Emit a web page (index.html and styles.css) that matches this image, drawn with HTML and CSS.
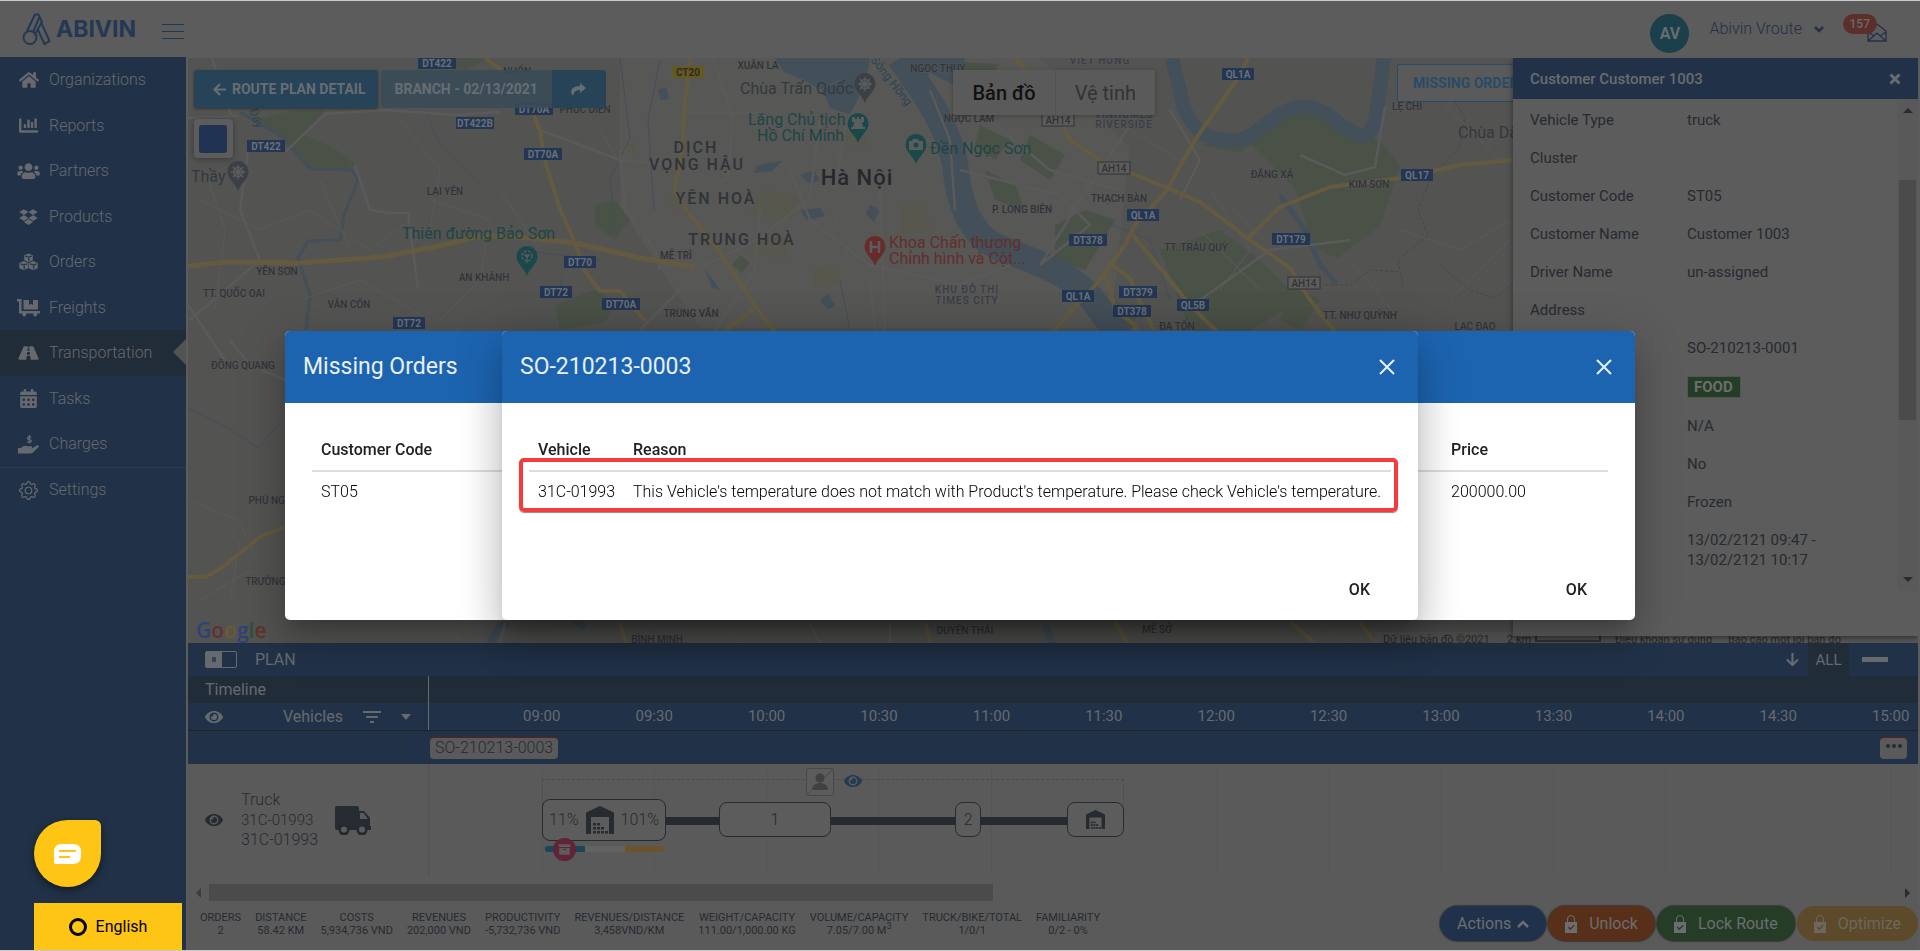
FILE: index.html
```html
<!DOCTYPE html>
<html lang="en">
<head>
<meta charset="utf-8">
<title>Abivin vRoute</title>
<link rel="stylesheet" href="styles.css">
</head>
<body>
<svg class="defs" aria-hidden="true">
  <symbol id="eye" viewBox="0 0 576 512"><path d="M572.52 241.4C518.29 135.59 410.93 64 288 64S57.68 135.64 3.48 241.41a32.35 32.35 0 0 0 0 29.19C57.71 376.41 165.07 448 288 448s230.32-71.64 284.52-177.41a32.35 32.35 0 0 0 0-29.19zM288 400a144 144 0 1 1 144-144 143.93 143.93 0 0 1-144 144zm0-240a95.31 95.31 0 0 0-25.31 3.79 47.85 47.85 0 0 1-66.9 66.9A95.78 95.78 0 1 0 288 160z"/></symbol>
  <symbol id="lock" viewBox="0 0 12 19"><path d="M2.500 8V5a3.500 3.500 0 0 1 7 0v3" fill="none" stroke="currentColor" stroke-width="1"/><path fill-rule="evenodd" d="M0 8h12v11H0zM2.700 13.500 5.300 16.300 9.700 11.700 8.700 10.800 5.300 14.300 3.700 12.500z"/></symbol>
  <symbol id="depot" viewBox="0 0 28 28"><path fill-rule="evenodd" d="M0 6.500 14 0l14 6.500V28h-5V11H5v17H0z"/><path d="M7 17h3v2.500H7zM11 17h3v2.500h-3zM7 21h3v2.500H7zM11 21h3v2.500h-3zM15 21h3v2.500h-3zM7 25h3v2.500H7zM11 25h3v2.500h-3zM15 25h3v2.500h-3zM19 25h3v2.500h-3z"/></symbol>
  <symbol id="close" viewBox="0 0 16 16"><path d="M1 1 15 15M15 1 1 15" fill="none" stroke="currentColor" stroke-width="2"/></symbol>
</svg>

<div class="app">
  <header class="topbar">
    <a class="logo" href="#">
      <svg class="line" width="30" height="33" viewBox="0 0 30 33" stroke="currentColor" stroke-width="2"><circle cx="8" cy="24.500" r="6.500"/><path d="M5 18 13 1.500h3.500L20 9l-7.500 13M11 19l6.500-15M19 9l8.500 19-5 3-6.500-14"/></svg>
      <span>ABIVIN</span>
    </a>
    <button class="burger" aria-label="Menu"><i></i><i></i><i></i></button>
    <div class="account">
      <span class="avatar">AV</span>
      <button class="user">Abivin Vroute <svg class="line" width="10" height="7" viewBox="0 0 10 7"><path d="M1 1l4 4 4-4" stroke="currentColor" stroke-width="2.500"/></svg></button>
      <button class="inbox" aria-label="Messages">
        <svg class="line" width="20" height="19" viewBox="0 0 20 19" stroke="currentColor" stroke-width="1.300"><path d="M1 8 10 1l9 7v10H1zM1 9l6 4M19 9l-6 4M1 18l9-8 9 8"/></svg>
        <span class="count">157</span>
      </button>
    </div>
  </header>

  <div class="body">
    <nav class="sidebar">
      <a href="#"><svg width="20" height="18" viewBox="0 0 576 512"><path d="M280.37 148.26L96 300.11V464a16 16 0 0 0 16 16l112.06-.29a16 16 0 0 0 15.92-16V368a16 16 0 0 1 16-16h64a16 16 0 0 1 16 16v95.64a16 16 0 0 0 16 16.05L464 480a16 16 0 0 0 16-16V300L295.67 148.26a12.19 12.19 0 0 0-15.3 0zM571.6 251.47L488 182.56V44.05a12 12 0 0 0-12-12h-56a12 12 0 0 0-12 12v72.61L318.47 43a48 48 0 0 0-61 0L4.34 251.47a12 12 0 0 0-1.6 16.9l25.5 31A12 12 0 0 0 45.15 301l235.22-193.74a12.19 12.19 0 0 1 15.3 0L530.9 301a12 12 0 0 0 16.9-1.6l25.5-31a12 12 0 0 0-1.7-16.93z"/></svg>Organizations</a>
      <a href="#"><svg width="19" height="19" viewBox="0 0 512 512"><path d="M332.8 320h38.4c6.4 0 12.8-6.4 12.8-12.8V172.8c0-6.4-6.4-12.8-12.8-12.8h-38.4c-6.4 0-12.8 6.4-12.8 12.8v134.4c0 6.4 6.4 12.8 12.8 12.8zm96 0h38.4c6.4 0 12.8-6.4 12.8-12.8V76.8c0-6.4-6.4-12.8-12.8-12.8h-38.4c-6.4 0-12.8 6.4-12.8 12.8v230.4c0 6.4 6.4 12.8 12.8 12.8zm-288 0h38.4c6.4 0 12.8-6.4 12.8-12.8v-70.4c0-6.4-6.4-12.8-12.8-12.8h-38.4c-6.4 0-12.8 6.4-12.8 12.8v70.4c0 6.4 6.4 12.8 12.8 12.8zm96 0h38.4c6.4 0 12.8-6.4 12.8-12.8V108.8c0-6.4-6.4-12.8-12.8-12.8h-38.4c-6.4 0-12.8 6.4-12.8 12.8v198.4c0 6.4 6.4 12.8 12.8 12.8zM496 384H64V80c0-8.84-7.16-16-16-16H16C7.16 64 0 71.16 0 80v336c0 17.67 14.33 32 32 32h464c8.84 0 16-7.16 16-16v-32c0-8.84-7.16-16-16-16z"/></svg>Reports</a>
      <a href="#"><svg width="23" height="18" viewBox="0 0 640 512"><path d="M96 224c35.3 0 64-28.7 64-64s-28.7-64-64-64-64 28.7-64 64 28.7 64 64 64zm448 0c35.3 0 64-28.7 64-64s-28.7-64-64-64-64 28.7-64 64 28.7 64 64 64zm32 32h-64c-17.6 0-33.5 7.1-45.1 18.6 40.3 22.1 68.9 62 75.1 109.4h66c17.7 0 32-14.3 32-32v-32c0-35.3-28.7-64-64-64zm-256 0c61.9 0 112-50.1 112-112S381.9 32 320 32 208 82.1 208 144s50.1 112 112 112zm76.8 32h-8.3c-20.8 10-43.9 16-68.5 16s-47.6-6-68.5-16h-8.3C179.6 288 128 339.6 128 403.2V432c0 26.5 21.5 48 48 48h288c26.5 0 48-21.5 48-48v-28.8c0-63.6-51.6-115.2-115.2-115.2zm-223.7-13.4C161.5 263.1 145.6 256 128 256H64c-35.3 0-64 28.7-64 64v32c0 17.7 14.3 32 32 32h65.9c6.3-47.4 34.9-87.3 75.2-109.4z"/></svg>Partners</a>
      <a href="#"><svg width="19" height="18" viewBox="0 0 528 512"><path d="M264.4 116.3l-132 84.3 132 84.3-132 84.3L0 284.1l132.3-84.3L0 116.3 132.3 32l132.1 84.3zM131.6 395.7l132-84.3 132 84.3-132 84.3-132-84.3zm132.8-111.6l132-84.3-132-83.6L395.7 32 528 116.3l-132.3 84.3L528 284.8l-132.3 84.3-131.3-85z"/></svg>Products</a>
      <a href="#"><svg width="19" height="18" viewBox="0 0 20 18"><path d="M10 0l4.500 2v5.200L10 9.300 5.500 7.200V2zM5 8l4.700 2.100v5.400L5 17.800.300 15.500v-5.400zM15 8l4.700 2.100v5.400L15 17.800l-4.700-2.300v-5.400z"/><path d="M6.500 2.600 10 4l3.500-1.400M10.500 4.500v4M1.500 10.800 5 12.300l3.500-1.500M5.500 13v4M11.500 10.800l3.500 1.500 3.500-1.500M15.500 13v4" fill="none" stroke="#213248" stroke-width="1.200"/></svg>Orders</a>
      <a href="#"><svg width="23" height="18" viewBox="0 0 23 18"><path d="M0 0h4.500v12H23v2.500h-3a2 2 0 1 1-3.500 0H9a2 2 0 1 1-3.500 0H2V2.500H0zM6.500 1H12v5l2-1.200L16 6V1h5v9.500H6.500z"/></svg>Freights</a>
      <a href="#" class="active"><svg width="21" height="18" viewBox="0 0 576 512"><path d="M573.19 402.67l-139.79-320C428.43 71.29 417.6 64 405.68 64h-97.59l2.45 23.16c.5 4.72-3.21 8.84-7.96 8.84h-29.16c-4.75 0-8.46-4.12-7.96-8.84L267.91 64h-97.59c-11.93 0-22.76 7.29-27.73 18.67L2.8 402.67C-6.45 423.86 8.31 448 30.54 448h196.84l10.31-97.68c.86-8.14 7.72-14.32 15.91-14.32h68.8c8.19 0 15.05 6.18 15.91 14.32L348.62 448h196.84c22.23 0 36.99-24.14 27.73-45.33zM260.4 135.16a8 8 0 0 1 7.96-7.16h39.29c4.09 0 7.53 3.09 7.96 7.16l4.6 43.58c.75 7.09-4.81 13.26-11.93 13.26h-40.54c-7.13 0-12.68-6.17-11.93-13.26l4.59-43.58zM315.64 304h-55.29c-9.5 0-16.91-8.23-15.91-17.68l5.07-48c.86-8.14 7.72-14.32 15.91-14.32h45.15c8.19 0 15.05 6.18 15.91 14.32l5.07 48c1 9.45-6.41 17.68-15.91 17.68z"/></svg>Transportation</a>
      <a href="#"><svg width="17" height="19" viewBox="0 0 448 512"><path d="M0 464c0 26.5 21.5 48 48 48h352c26.5 0 48-21.5 48-48V192H0v272zm320-196c0-6.6 5.4-12 12-12h40c6.6 0 12 5.4 12 12v40c0 6.6-5.4 12-12 12h-40c-6.6 0-12-5.4-12-12v-40zm0 128c0-6.6 5.4-12 12-12h40c6.6 0 12 5.4 12 12v40c0 6.6-5.4 12-12 12h-40c-6.6 0-12-5.4-12-12v-40zM192 268c0-6.6 5.4-12 12-12h40c6.6 0 12 5.4 12 12v40c0 6.6-5.4 12-12 12h-40c-6.6 0-12-5.4-12-12v-40zm0 128c0-6.6 5.4-12 12-12h40c6.6 0 12 5.4 12 12v40c0 6.6-5.4 12-12 12h-40c-6.6 0-12-5.4-12-12v-40zM64 268c0-6.6 5.4-12 12-12h40c6.6 0 12 5.4 12 12v40c0 6.6-5.4 12-12 12H76c-6.6 0-12-5.4-12-12v-40zm0 128c0-6.6 5.4-12 12-12h40c6.6 0 12 5.4 12 12v40c0 6.6-5.4 12-12 12H76c-6.6 0-12-5.4-12-12v-40zM400 64h-48V16c0-8.8-7.2-16-16-16h-32c-8.8 0-16 7.2-16 16v48H160V16c0-8.8-7.2-16-16-16h-32c-8.8 0-16 7.2-16 16v48H48C21.5 64 0 85.5 0 112v48h448v-48c0-26.5-21.5-48-48-48z"/></svg>Tasks</a>
      <a href="#"><svg width="21" height="19" viewBox="0 0 21 19"><path d="M0 13h3c2-2 4-2.300 6-1.700h4c1.500 0 1.500 2 0 2.200H9.500h4.500l4.500-3c1.500-.800 3 .600 1.800 1.800L15 17.500c-.800.700-1.500 1-2.500 1H0z"/><path d="M13.200 2.500c-.700-.900-3.700-1-3.700.700s3.800 1 3.800 2.700-3 1.600-3.900.600M11.400 0v8.500" fill="none" stroke="currentColor" stroke-width="1.300"/></svg>Charges</a>
      <a href="#" class="split"><svg width="19" height="19" viewBox="0 0 16 16"><path d="M8 4.754a3.246 3.246 0 1 0 0 6.492 3.246 3.246 0 0 0 0-6.492zM5.754 8a2.246 2.246 0 1 1 4.492 0 2.246 2.246 0 0 1-4.492 0z"/><path d="M9.796 1.343c-.527-1.79-3.065-1.79-3.592 0l-.094.319a.873.873 0 0 1-1.255.52l-.292-.16c-1.64-.892-3.433.902-2.54 2.541l.159.292a.873.873 0 0 1-.52 1.255l-.319.094c-1.79.527-1.79 3.065 0 3.592l.319.094a.873.873 0 0 1 .52 1.255l-.16.292c-.892 1.64.901 3.434 2.541 2.54l.292-.159a.873.873 0 0 1 1.255.52l.094.319c.527 1.79 3.065 1.79 3.592 0l.094-.319a.873.873 0 0 1 1.255-.52l.292.16c1.64.893 3.434-.902 2.54-2.541l-.159-.292a.873.873 0 0 1 .52-1.255l.319-.094c1.79-.527 1.79-3.065 0-3.592l-.319-.094a.873.873 0 0 1-.52-1.255l.16-.292c.893-1.64-.902-3.433-2.541-2.54l-.292.159a.873.873 0 0 1-1.255-.52l-.094-.319zm-2.633.283c.246-.835 1.428-.835 1.674 0l.094.319a1.873 1.873 0 0 0 2.693 1.115l.291-.16c.764-.415 1.6.42 1.184 1.185l-.159.292a1.873 1.873 0 0 0 1.116 2.692l.318.094c.835.246.835 1.428 0 1.674l-.319.094a1.873 1.873 0 0 0-1.115 2.693l.16.291c.415.764-.42 1.6-1.185 1.184l-.291-.159a1.873 1.873 0 0 0-2.693 1.116l-.094.318c-.246.835-1.428.835-1.674 0l-.094-.319a1.873 1.873 0 0 0-2.692-1.115l-.292.16c-.764.415-1.6-.42-1.184-1.185l.159-.291A1.873 1.873 0 0 0 1.945 8.93l-.319-.094c-.835-.246-.835-1.428 0-1.674l.319-.094A1.873 1.873 0 0 0 3.06 4.377l-.16-.292c-.415-.764.42-1.6 1.185-1.184l.292.159a1.873 1.873 0 0 0 2.692-1.115l.094-.319z"/></svg>Settings</a>
    </nav>

    <main class="content">
      <section class="map">
        <svg class="map-canvas" viewBox="188 58 1730 585" preserveAspectRatio="xMinYMin slice">
          <defs>
            <rect id="b38" x="-19" y="-6" width="38" height="12"/>
            <rect id="b32" x="-16" y="-6" width="32" height="12"/>
            <path id="pin" d="M0 15C-2 8-10.500 3-10.500-4.500a10.500 10.500 0 0 1 21 0C10.500 3 2 8 0 15z"/>
          </defs>
          <rect x="188" y="58" width="1730" height="585" fill="#535351"/>
          <path fill="#575756" d="M620 58h420l90 90-20 180H700l-80-120z"/>
          <g class="park">
            <path d="M258 120l35-10h32l-20 25 30 14 20 16-8 5-38-2-19-25z"/><path d="M435 58h55l-25 12-20-4zM595 205l20-5 15 20-15 20-20-15z"/>
            <path d="M555 305l40-15 20 12-10 20-45 8zM740 255l10 8-8 10-10-8z"/>
            <path d="M1200 145l40 8 50-42 60 10 35 25 15 20-20 60-42 32-25-10-18-60-50-50z"/>
            <path d="M1030 135l35 20-15 25-30-20zM1055 225l30-15 30 10-30 50-30-10zM1160 250l60-20 40 30 40 40-50 31h-60zM985 170l30 15 10 25-30-10zM1110 300l30 10-10 20h-20zM1290 285l30 15-20 30-20-10z"/>
            <path d="M960 62l40 2-15 20-25-5zM980 125l30 15-15 20-20-15z"/>
          </g>
          <path fill="#58574d" d="M760 190l40 5-10 25-40-5zM900 205l25-5 5 30-30 5zM840 130l30 4-5 12-30-4zM755 235l35 5-5 18-35-4zM810 270l30-4v16l-25 6zM618 145l20-2-5 12zM665 200l15-3-3 20z"/>
          <g class="water-fill">
            <path d="M775 58h95l-6 34-14 22-20-6-6-16-20-12-20-8zM905 58h60l-5 30-20-10zM757 165l25-4-10 10-18 2zM800 175l14-5 6 10-10 4zM800 210l20-2 5 8-18 4zM870 205l10 5-6 12-8-8zM820 300l8-6 8 12-8 3zM658 90l8-3 3 12-8 1zM560 275l4 20-3 2zM705 270l15 20-8-2z"/>
          </g>
          <g class="water">
            <path stroke-width="26" d="M900 58c20 30 45 60 55 105 3 35 12 65 35 80 35 18 80 25 105 60l25 35"/>
            <path stroke-width="14" d="M1172 58l12 50c10 25 25 32 50 33 25-2 40-34 70-34 30 0 40 32 62 28 12-5 12-40 18-77"/>
            <path stroke-width="5" d="M1280 195l25 35 15 35 16 18"/>
            <path stroke-width="3" d="M240 112l42 25 28 32 42 1 6 10-14 35-4 25-32 1-10 17 12 37-4 35"/>
            <path stroke-width="1" d="M425 110l15 35 45 45M620 58l10 80-20 40 5 50M520 250l80 10M660 60l-12 60 6 90M850 330l-10-50M188 408l40 20 30 20 27-30M1100 220l50 20 20 60M1300 225l30 30"/>
            <path stroke-width="7" d="M575 620l10 8M490 643l10-18h10M1045 625l10 25"/>
          </g>
          <g class="minor">
            <path stroke-width="2.500" d="M188 118l50-2M232 118l-20-60M190 320l70-60-20-50 8-60M285 152l40-38 60-4 70 5 45-3M355 165l15 45 20 3 18 0 10 75M540 130l80 30 50 5M685 113h75l30 25M713 58l20 60-5 60-20 10M620 150l5 60 30 40 5 20M700 268l60-30 50-40 10-80M790 170l20 50 60 45 90 20 50-20M880 58l-35 70-10 60M960 170l100 25 30 30-50 40 50-80 50-75M990 120l60 50 70 20M1180 200l20-40-30-50M1200 300l70-50 80-10M1300 155l45 20 30-8 10-60M870 280l5 50M640 330l60-60M760 210l-5 60-40 60M930 90l20 50 5 70M880 190l5 140M230 340l20 25 35 15M188 305l40 60M820 643l-10-20M890 643v-20M500 643l5-20"/>
            <path stroke-width="1" d="M200 200l60 30 50-20 60 40 40-30M205 170l20 60-10 80M320 180l30 70M400 120l40 50-10 60M300 300l60-20 70 40M430 200l60 20-10 60-40 40M500 190l40 60M720 90l60 20 60-30M730 160l40 50M600 130l30 50M1010 180l60 30 30-50M1210 190l40 60-30 40M1230 205l40 40M1200 230l60 60M1350 260l50 60M1400 230l60 20 50-30M1450 300l60-60M1440 100l60 60M830 200l30 90M1130 130l50 30M188 500l50 20 20 40M200 600l50-30 30 20M240 540l-10 60M640 643l10-20M740 643l-10-20M1350 643l-30-20"/>
          </g>
          <g class="highway">
            <path d="M188 266l37-4 75 1 80-6 50-9 50-12 50 2 45 5 65 15 55 9" stroke-width="5"/>
            <path d="M188 577h17l15-8 40-32 25-10M485 58l38 28 17 45 5 30 15 48 14 32 11 30 15 20h20l25 30M690 58l-6 55-2 40-8 38 16 24 25 30 45 68 20 25M725 330l28-20M1248 58l-8 17-45 65-20 35-8 15-32 35-10 20-25 35-25 27-25 28M1015 58l15 17 30 45 10 20 30 20 60 25 40 17 50 38 40 28 20 32 25 32M1248 238l32-31 50-20 70-9 60-13 53-5M1133 235l27 33 30 37 30 30M1108 262l22 16 10 24 15 30M1105 270l10 40 20 15v10M1513 159h20M620 622l6 21M1115 622l12 21M1290 622l25 21M1360 622l15 21M925 622l6 21" stroke-width="4"/>
          </g>
          <path fill="none" stroke="#474747" stroke-dasharray="3 2" d="M1455 102l10 15-5 30-20 20M1430 180l-12 30 10 25-30 25 5 25M1325 285h25l20-15 30 2M1440 265l30 25 25 8 18-14"/>
          <g class="pins">
            <use href="#pin" x="238" y="176" fill="#3a4045"/><use href="#pin" x="865" y="88" fill="#3a4045"/>
            <use href="#pin" x="527" y="261" fill="#1b484b"/><use href="#pin" x="858" y="128" fill="#1b484b"/><use href="#pin" x="916" y="149" fill="#1b484b"/>
            <use href="#pin" x="875" y="251" fill="#672c2a"/>
            <g fill="none" stroke="#5c5c5c" stroke-width="1.300"><circle cx="238" cy="172" r="4.500"/><circle cx="238" cy="172" r="1.500"/><path d="M231 172h14M238 165v14M233 167l10 10M243 167l-10 10"/><circle cx="865" cy="84" r="4.500"/><circle cx="865" cy="84" r="1.500"/><path d="M858 84h14M865 77v14M860 79l10 10M870 79l-10 10"/><circle cx="527" cy="256" r="5" stroke-dasharray="2.500 1.500"/><path d="M527 254v9M524 254l3 3 3-3"/><path d="M871 241v12M879 241v12M871 247h8" stroke-width="2.500"/></g>
            <path fill="#5c5c5c" d="M852 117h3v2h2v-2h2v2h2v-2h3v5h-2l1 5h2v2h-14v-2h2l1-5h-2zM909 141h3l1-2h5l1 2h4v9h-14z"/><circle cx="916" cy="145" r="2.500" fill="#1b484b"/>
          </g>
          <g class="shield">
            <g transform="translate(437 63)"><use href="#b38"/><text>DT422</text></g>
            <g transform="translate(266 146)"><use href="#b38"/><text>DT422</text></g>
            <g transform="translate(475 123)"><use href="#b38"/><text>DT422B</text></g>
            <g transform="translate(534 109)"><use href="#b38"/><text>DT70A</text></g>
            <g transform="translate(543 154)"><use href="#b38"/><text>DT70A</text></g>
            <g transform="translate(580 262)"><use href="#b32"/><text>DT70</text></g>
            <g transform="translate(556 292)"><use href="#b32"/><text>DT72</text></g>
            <g transform="translate(621 304)"><use href="#b38"/><text>DT70A</text></g>
            <g transform="translate(409 323)"><use href="#b32"/><text>DT72</text></g>
            <g transform="translate(1238 74)"><use href="#b32"/><text>QL1A</text></g>
            <g transform="translate(1143 215)"><use href="#b32"/><text>QL1A</text></g>
            <g transform="translate(1088 240)"><use href="#b38"/><text>DT378</text></g>
            <g transform="translate(1291 239)"><use href="#b38"/><text>DT179</text></g>
            <g transform="translate(1417 175)"><use href="#b32"/><text>QL17</text></g>
            <g transform="translate(1138 292)"><use href="#b38"/><text>DT379</text></g>
            <g transform="translate(1078 296)"><use href="#b32"/><text>QL1A</text></g>
            <g transform="translate(1132 311)"><use href="#b38"/><text>DT378</text></g>
            <g transform="translate(1193 305)"><use href="#b32"/><text>QL5B</text></g>
          </g>
          <g class="shield toll"><g transform="translate(688 72)"><use href="#b32"/><text>CT20</text></g></g>
          <g class="shield asian">
            <g transform="translate(1058 120)"><use href="#b32"/><text>AH14</text></g>
            <g transform="translate(1114 168)"><use href="#b32"/><text>AH14</text></g>
            <g transform="translate(1304 283)"><use href="#b32"/><text>AH14</text></g>
          </g>
          <g class="town">
            <text x="445" y="195">LẠI YÊN</text><text x="277" y="275">YÊN SƠN</text><text x="234" y="297">TT. QUỐC OAI</text><text x="349" y="308">VÂN CÔN</text>
            <text x="484" y="281">AN KHÁNH</text><text x="676" y="259">MỄ TRÌ</text><text x="691" y="317">TRUNG VĂN</text><text x="243" y="369">ĐỒNG QUANG</text><text x="275" y="504">PHÚ NGHĨA</text><text x="276" y="585">TRƯỜNG YÊN</text>
            <text x="517" y="75">NHỔN</text><text x="585" y="113">PHÚC DIỄN</text><text x="758" y="69">XUÂN LA</text><text x="938" y="72">NGỌC THỤY</text><text x="969" y="122">NGỌC LÂM</text>
            <text x="1022" y="213">P. LONG BIÊN</text><text x="1119" y="202">THẠCH BÀN</text><text x="1272" y="178">ĐẶNG XÁ</text><text x="1369" y="188">KIM SƠN</text><text x="1196" y="251">TT. TRÂU QUỲ</text>
            <text x="1360" y="319">TT. NHƯ QUỲNH</text><text x="1177" y="330">ĐA TỐN</text><text x="1475" y="330">LẠC ĐẠO</text><text x="1407" y="110">LỆ CHI</text>
            <text x="657" y="643">BÌNH MINH</text><text x="965" y="634">DUYÊN THÁI</text><text x="1157" y="633">MỄ SỞ</text>
          </g>
          <g class="suburb"><text x="1100" y="64">VIỆT HƯNG</text><text x="1124" y="118">VINHOMES</text><text x="1124" y="128">RIVERSIDE</text><text x="967" y="293">KHU ĐÔ THỊ</text><text x="967" y="304">TIMES CITY</text></g>
          <g class="district"><text x="696" y="153">DỊCH</text><text x="697" y="170">VỌNG HẬU</text><text x="716" y="204">YÊN HOÀ</text><text x="742" y="245">TRUNG HOÀ</text></g>
          <text x="857" y="185" class="city">Hà Nội</text>
          <g class="poi">
            <text x="191" y="182">Thầy</text><text x="740" y="94">Chùa Trấn Quốc</text><text x="1458" y="138">Chùa Dâu</text>
            <g class="teal"><text x="402" y="239">Thiên đường Bảo Sơn</text><text x="748" y="125">Lăng Chủ tịch</text><text x="757" y="141">Hồ Chí Minh</text><text x="930" y="154">Đền Ngọc Sơn</text></g>
            <g class="red"><text x="889" y="248">Khoa Chấn thương</text><text x="889" y="264">Chỉnh hình và Cột...</text></g>
            <text class="river" transform="translate(870 60) rotate(52)">Sông Hồng</text><text class="river" transform="translate(249 110) rotate(70)">Đáy</text>
          </g>
          <text x="196" y="638" class="google"><tspan fill="#2b4379">G</tspan><tspan fill="#65302d">o</tspan><tspan fill="#6b5b2a">o</tspan><tspan fill="#2b4379">g</tspan><tspan fill="#2d5038">l</tspan><tspan fill="#65302d">e</tspan></text>
          <rect x="1375" y="632" width="543" height="11" fill="#575757"/>
          <g class="legal"><text x="1383" y="643">Dữ liệu bản đồ ©2021</text><text x="1507" y="643">2 km</text><text x="1615" y="643">Điều khoản sử dụng</text><text x="1728" y="643">Báo cáo một lỗi bản đồ</text><path d="M1536 632v9h64v-9" fill="none" stroke="#333" stroke-width="2"/></g>
        </svg>

        <div class="map-tools">
          <div class="crumbs">
            <button class="btn-back"><svg class="line" width="13" height="13" viewBox="0 0 13 13"><path d="M7 1 1.500 6.500 7 12M2 6.500h11" stroke="currentColor" stroke-width="2.200"/></svg>ROUTE PLAN DETAIL</button>
            <button class="btn-branch">BRANCH - 02/13/2021</button>
            <button class="btn-share" aria-label="Share"><svg width="15" height="13" viewBox="0 0 15 13"><path d="M9 0l6 5-6 5V7C5 7 3 8.500 2.500 12.500.500 12-.500 9 .700 6.500 2 4 5 3.200 9 3z"/></svg></button>
          </div>
          <div class="map-type"><button class="on">Bản đồ</button><button>Vệ tinh</button></div>
          <button class="btn-missing">MISSING ORDERS</button>
        </div>
        <button class="swatch" aria-label="Draw area"><i></i></button>

        <aside class="panel">
          <h2>Customer Customer 1003 <button aria-label="Close"><svg width="12" height="12" viewBox="0 0 12 12"><path d="M1.500 1.500l9 9M10.500 1.500l-9 9" stroke="currentColor" stroke-width="3"/></svg></button></h2>
          <div class="panel-scroll">
            <dl>
              <dt>Vehicle Type</dt><dd>truck</dd>
              <dt>Cluster</dt><dd></dd>
              <dt>Customer Code</dt><dd>ST05</dd>
              <dt>Customer Name</dt><dd>Customer 1003</dd>
              <dt>Driver Name</dt><dd>un-assigned</dd>
              <dt>Address</dt><dd></dd>
              <dt></dt><dd>SO-210213-0001</dd>
              <dt></dt><dd><span class="tag">FOOD</span></dd>
              <dt></dt><dd>N/A</dd>
              <dt></dt><dd>No</dd>
              <dt></dt><dd>Frozen</dd>
              <dt></dt><dd>13/02/2121 09:47 -<br>13/02/2121 10:17</dd>
            </dl>
            <div class="vbar"><b class="up"></b><i></i><b class="down"></b></div>
          </div>
        </aside>
      </section>

      <section class="plan">
        <div class="plan-head">
          <span class="switch"><i></i></span><span>PLAN</span>
          <div class="plan-tools">
            <button class="sort" aria-label="Sort"><svg class="line" width="13" height="13" viewBox="0 0 13 13"><path d="M1 6.500 6.500 12 12 6.500M6.500 0v11" stroke="currentColor" stroke-width="2.200"/></svg></button>
            <button class="all">ALL</button>
            <button class="mini" aria-label="Minimise"><i></i></button>
          </div>
        </div>
        <div class="strip dark"><div class="side">Timeline</div></div>
        <div class="strip">
          <div class="side cols"><svg class="eye"><use href="#eye"/></svg><span>Vehicles</span><svg width="18" height="12" viewBox="0 0 18 12"><path d="M0 0h18v2H0zM3 5h12v2H3zM7 10h4v2H7z"/></svg><svg width="10" height="6" viewBox="0 0 10 6"><path d="M0 0h10L5 6z"/></svg></div>
          <div class="hours"><span>09:00</span><span>09:30</span><span>10:00</span><span>10:30</span><span>11:00</span><span>11:30</span><span>12:00</span><span>12:30</span><span>13:00</span><span>13:30</span><span>14:00</span><span>14:30</span><span>15:00</span></div>
        </div>
        <div class="orders"><button class="chip">SO-210213-0003</button><button class="chip more" aria-label="More"><i></i><i></i><i></i></button></div>
        <div class="lane">
          <div class="vehicle">
            <svg class="eye"><use href="#eye"/></svg>
            <div class="names"><span>Truck</span><span class="plate">31C-01993</span><span>31C-01993</span></div>
            <svg width="36" height="29" viewBox="0 0 36 29"><path fill-rule="evenodd" d="M2 0h20q2 0 2 2v3h5l6 7v8h1v4h-3.500a5.500 5.500 0 0 1-11 0h-7a5.500 5.500 0 0 1-11 0H2q-2 0-2-2V2q0-2 2-2zM25 7v6h8l-4.500-6z"/><circle cx="9" cy="23.500" r="4.500"/><circle cx="27" cy="23.500" r="4.500"/><circle cx="9" cy="23.500" r="3" fill="#5b5b5b"/><circle cx="27" cy="23.500" r="3" fill="#5b5b5b"/></svg>
          </div>
          <div class="canvas">
            <div class="trip" style="left:7.59%;width:39.09%"></div>
            <div class="link" style="left:12%;width:33%"></div>
            <div class="stop depot" style="left:7.59%;width:8.33%"><span>11%</span><svg width="28" height="28"><use href="#depot"/></svg><span>101%</span></div>
            <div class="stop" style="left:19.48%;width:7.52%">1</div>
            <div class="stop" style="left:35.33%;width:1.75%">2</div>
            <div class="stop" style="left:42.85%;width:3.83%"><svg width="19" height="19"><use href="#depot"/></svg></div>
            <div class="load" style="left:7.8%;width:8%"><i></i><i></i><i></i></div>
            <svg class="box" style="left:8.33%" viewBox="0 0 22 22"><circle cx="11" cy="11" r="11" fill="#612338"/><path fill="#5c5c5c" fill-rule="evenodd" d="M5.500 6h11v2.500h-11zM6 9.500h10V16H6zM9.500 10.500v1h3v-1z"/></svg>
            <button class="driver" style="left:25.32%" aria-label="Driver"><svg viewBox="0 0 26 26"><circle cx="13" cy="9" r="4.500"/><path d="M5 21c0-5 4-7 8-7s8 2 8 7z"/><path d="M0 26 26 0" stroke="#474747" stroke-width="1"/></svg></button>
            <svg class="eye blue" style="left:27.87%"><use href="#eye"/></svg>
          </div>
        </div>
        <div class="hbar"><b class="left"></b><div><i></i></div><b class="right"></b></div>
        <div class="foot">
          <ul class="stats">
            <li>ORDERS<br>2</li><li>DISTANCE<br>58.42 KM</li><li>COSTS<br>5,934,736 VND</li><li>REVENUES<br>202,000 VND</li><li>PRODUCTIVITY<br>-5,732,736 VND</li><li>REVENUES/DISTANCE<br>3,458VND/KM</li><li>WEIGHT/CAPACITY<br>111.00/1,000.00 KG</li><li>VOLUME/CAPACITY<br>7.05/7.00 M<sup>3</sup></li><li>TRUCK/BIKE/TOTAL<br>1/0/1</li><li>FAMILIARITY<br>0/2 - 0%</li>
          </ul>
          <div class="actions">
            <button class="act">Actions <svg class="line" width="12" height="8" viewBox="0 0 12 8"><path d="M1 7l5-5 5 5" stroke="currentColor" stroke-width="2.500"/></svg></button>
            <button class="unlock"><svg width="12" height="19"><use href="#lock"/></svg>Unlock</button>
            <button class="lockr"><svg width="12" height="19"><use href="#lock"/></svg>Lock Route</button>
            <button class="opt"><svg width="12" height="19"><use href="#lock"/></svg>Optimize</button>
          </div>
        </div>
      </section>
    </main>
  </div>
</div>

<button class="chat" aria-label="Chat"><svg width="27" height="20" viewBox="0 0 27 20"><path fill="#fff" d="M8 0h11q8 0 8 8v4q0 8-8 8H2q-2 0-2-2V8q0-8 8-8z"/><path stroke="#fec514" stroke-width="2" d="M5 7h17M5 13h11"/></svg></button>
<button class="lang"><i></i>English</button>

<div class="overlay">
  <section class="modal wide" role="dialog" aria-label="Missing Orders">
    <h2>Missing Orders <button aria-label="Close"><svg width="16" height="16"><use href="#close"/></svg></button></h2>
    <table>
      <thead><tr><th class="c-code">Customer Code</th><th>Price</th></tr></thead>
      <tbody><tr><td>ST05</td><td>200000.00</td></tr></tbody>
    </table>
    <footer><button>OK</button></footer>
  </section>
</div>
<div class="overlay">
  <section class="modal" role="dialog" aria-label="SO-210213-0003">
    <h2>SO-210213-0003 <button aria-label="Close"><svg width="16" height="16"><use href="#close"/></svg></button></h2>
    <div class="marked">
      <table class="fixed">
        <thead><tr><th class="c-veh">Vehicle</th><th>Reason</th></tr></thead>
        <tbody><tr><td>31C-01993</td><td>This Vehicle's temperature does not match with Product's temperature. Please check Vehicle's temperature.</td></tr></tbody>
      </table>
      <div class="marker"></div>
    </div>
    <footer><button>OK</button></footer>
  </section>
</div>
</body>
</html>
```
FILE: styles.css
```css
:root {
  --white: #5c5c5c;
  --navy: #213248;
  --navy-dark: #202c38;
  --sky: #274357;
  --ink: #262a31;
  --blue: #1c64b0;
  --yellow: #fec514;
}

* { box-sizing: border-box; }

body {
  margin: 0;
  font: 16px/20px Roboto, "Noto Sans", sans-serif;
  color: var(--ink);
  background: var(--white);
}

button {
  font: inherit;
  color: inherit;
  background: none;
  border: 0;
  padding: 0;
}

a { color: inherit; text-decoration: none; }
svg { fill: currentColor; display: block; flex: none; }
.line { fill: none; }
.defs { position: absolute; width: 0; height: 0; }

.app {
  display: flex;
  flex-direction: column;
  height: 100vh;
  border-top: 1px solid #c8cdd0;
  border-bottom: 1px solid #c8c8c8;
}

/* Top bar */
.topbar {
  display: flex;
  align-items: center;
  height: 56px;
  padding: 0 33px 0 22px;
}
.logo {
  display: flex;
  align-items: center;
  gap: 4px;
  color: #233854;
  font: 700 23px/32px Inter, sans-serif;
}
.burger { display: grid; gap: 6px; width: 22px; margin: 4px 0 0 26px; }
.burger i { height: 1px; background: #233854; }
.account { display: flex; align-items: center; margin-left: auto; }
.avatar {
  width: 39px;
  height: 39px;
  margin-top: 8px;
  border-radius: 50%;
  background: #1b3f4b;
  color: #656d70;
  font-weight: 700;
  line-height: 40px;
  text-align: center;
}
.user { display: flex; align-items: center; gap: 12px; margin-left: 20px; color: #242f48; font-weight: 300; }
.inbox { position: relative; margin-left: 43px; padding-top: 6px; color: #242f48; }
.count {
  position: absolute;
  right: 10px;
  bottom: 8px;
  padding: 0 7px;
  border-radius: 10px;
  background: #5c2f2b;
  color: #696969;
  font-size: 12px;
  font-weight: 500;
}

.body { display: flex; flex: 1; min-height: 0; }

/* Sidebar */
.sidebar {
  flex: none;
  width: 186px;
  background: var(--navy);
  color: #666a6f;
  font-weight: 300;
}
.sidebar a {
  position: relative;
  display: grid;
  grid-template-columns: 25px 1fr;
  align-items: center;
  gap: 8px;
  height: 45px;
  padding-left: 16px;
}
.sidebar a:nth-child(odd) { height: 46px; }
.sidebar a svg { justify-self: center; }
.sidebar .active { background: var(--navy-dark); }
.sidebar .active::after {
  content: "";
  position: absolute;
  right: 0;
  top: 9px;
  border: 13px solid transparent;
  border-left: 0;
  border-right-color: #535353;
}
.sidebar .split { border-top: 1px solid #2c3e54; }

.content {
  flex: 1;
  min-width: 0;
  display: flex;
  flex-direction: column;
  padding: 1px 2px 0;
}

/* Map */
.map { position: relative; flex: 1; min-height: 0; overflow: hidden; }
.map-canvas { position: absolute; inset: 0; width: 100%; height: 100%; }
.map-canvas text { font-family: Roboto, "Noto Sans", sans-serif; }
.park { fill: #4a5248; }
.water-fill { fill: #434f59; }
.water { fill: none; stroke: #434f59; }
.minor { fill: none; stroke: #5a5a5a; }
.highway { fill: none; stroke: #635a40; stroke-linejoin: round; }
.shield { fill: #233654; }
.shield text { fill: #6a7078; font-size: 10px; font-weight: 700; text-anchor: middle; dominant-baseline: central; }
.toll { fill: #655820; }
.toll text { fill: #2c2c26; }
.asian { fill: #5c5c5c; }
.asian use { stroke: #333; }
.asian text { fill: #333; font-weight: 500; }
.town text, .suburb text { fill: #303338; font-size: 10px; font-weight: 500; text-anchor: middle; paint-order: stroke; stroke: #575755; stroke-width: 1px; }
.suburb text { fill: #393d47; letter-spacing: 1px; }
.district text { fill: #303338; font-size: 16px; font-weight: 500; letter-spacing: 2px; text-anchor: middle; }
.city { fill: #26282b; font-size: 22px; font-weight: 500; letter-spacing: 1px; text-anchor: middle; }
.poi text { fill: #34393e; font-size: 16px; }
.poi .teal text { fill: #1d4546; }
.poi .red text { fill: #642e2b; }
.poi .river { fill: #2b4355; font-size: 12px; }
.map-canvas .google { font: 600 21px "Open Sans", sans-serif; }
.legal { fill: #2b2b2b; font-size: 11px; }

.map-tools {
  position: relative;
  display: flex;
  align-items: flex-start;
  padding: 12px 375px 0 6px;
}
.crumbs { display: flex; height: 38px; color: #666e74; font-size: 14px; font-weight: 700; }
.crumbs button { display: flex; align-items: center; }
.btn-back { gap: 6px; padding: 0 12px 0 19px; border-radius: 3px; background: var(--sky); box-shadow: 0 1px 3px #0006; margin-right: 3px; }
.btn-branch { padding: 0 14px; border-radius: 3px 0 0 3px; background: #3a4b58e6; }
.btn-share { justify-content: center; width: 54px; border-radius: 0 3px 3px 0; background: var(--sky); }
.map-type { display: flex; height: 45px; margin: 0 242px 0 auto; background: #5a5a5a; box-shadow: 0 1px 4px #0004; font-size: 20px; color: #333; border-radius: 2px; }
.map-type button { padding: 0 19px; }
.map-type .on { color: #111; font-weight: 500; border-right: 1px solid #535353; }
.btn-missing {
  width: 146px;
  height: 38px;
  margin-top: -6px;
  border: 1px solid #274b68;
  border-radius: 2px;
  background: #5a5a5a;
  color: #274b68;
  font-size: 14px;
  font-weight: 700;
}
.swatch { position: relative; margin: 4px 0 0 6px; padding: 6px 6px 5px 5px; border-radius: 4px; background: var(--white); box-shadow: 0 1px 6px #0005; }
.swatch i { display: block; width: 28px; height: 28px; border-radius: 3px; background: #213352; }

.panel {
  position: absolute;
  top: 0;
  right: 0;
  bottom: 7px;
  width: 405px;
  background: var(--white);
  box-shadow: 0 2px 6px #0007;
  font-size: 15px;
}
.panel h2 {
  display: flex;
  justify-content: space-between;
  align-items: center;
  height: 41px;
  margin: 0;
  padding: 0 17px;
  background: var(--navy);
  color: #686c71;
  font-size: 15px;
  font-weight: 500;
}
.panel-scroll { display: flex; height: 492px; }
.panel dl {
  flex: 1;
  display: grid;
  grid-template-columns: 157px 1fr;
  grid-auto-rows: minmax(20px, max-content);
  row-gap: 18px;
  margin: 0;
  padding: 11px 0 0 17px;
  align-content: start;
}
.panel dd { margin: 0; }
.tag { display: inline-block; padding: 0 7px 0 6px; border: 1px solid #4a5a4b; background: #243c28; color: #6a706a; font-weight: 700; }
.vbar { display: flex; flex-direction: column; align-items: center; width: 21px; padding: 9px 0; background: #595959; }
.vbar i { flex: 0 1 240px; width: 17px; margin-top: 67px; background: #4b4b4b; }
.vbar b, .hbar b { border: 5px solid transparent; }
.vbar .up { border-top: 0; border-bottom-color: #2b2b2b; }
.vbar .down { border-bottom: 0; border-top-color: #2b2b2b; margin-top: auto; }

/* Plan */
.plan { flex: none; background: #5a5a5a; padding-bottom: 7px; }
.plan-head { display: flex; align-items: center; height: 33px; padding-left: 17px; gap: 18px; background: var(--navy); color: #666a6f; }
.switch { width: 32px; height: 17px; border: 1px solid #666a6f; border-radius: 2px; }
.switch i { display: block; width: 16px; height: 15px; border: solid #666a6f; border-width: 5px 6px; background: #34425a; }
.plan-tools { display: flex; align-items: center; align-self: stretch; margin-left: auto; font-size: 15px; }
.plan-tools .all { align-self: stretch; width: 41px; margin: 0 13px 0 9px; background: var(--navy-dark); }
.mini { margin-right: 30px; }
.mini i { display: block; width: 26px; height: 5px; background: #666a6f; }
.strip { display: flex; height: 27px; background: var(--navy); color: #666a6f; }
.strip.dark { background: #202c38; }
.side { flex: none; width: 241px; padding-left: 17px; line-height: 27px; border-right: 1px solid #666a6f; }
.cols { display: flex; align-items: center; gap: 20px; padding-right: 17px; }
.cols span { margin-left: auto; }
.eye { width: 18px; height: 16px; }
.hours { flex: 1; display: flex; min-width: 0; overflow: hidden; font-size: 15px; line-height: 27px; }
.hours span { flex: 0 0 7.55%; text-align: center; }
.hours span:first-child { margin-left: 3.8%; }
.orders { display: flex; align-items: center; justify-content: space-between; height: 34px; padding: 0 11px 0 242px; border-top: 1px solid #222; background: var(--navy); }
.chip { height: 22px; padding: 0 5px; border-top: 1px solid #5c1f22; border-radius: 4px; background: #5a5a5a; font-weight: 300; }
.more { display: flex; justify-content: center; gap: 2px; width: 27px; padding-top: 6px; }
.more i { width: 4px; height: 4px; border-radius: 50%; background: var(--ink); }
.lane { display: flex; height: 112px; }
.vehicle { flex: none; display: flex; align-items: center; width: 241px; padding-left: 17px; border-right: 1px solid #535353; }
.names { display: grid; width: 94px; margin-left: 18px; font-weight: 300; }
.plate { font-size: 15px; }
.canvas {
  position: relative;
  flex: 1;
  background: linear-gradient(to right, #565656 1px, transparent 1px) 0 0 / 7.55% 100%;
}
.canvas > * { position: absolute; }
.trip { top: 15px; height: 26px; border: 1px dashed #4c4c4c; border-bottom: 0; }
.link { top: 53px; height: 8px; background: #262b31; }
.stop { top: 38px; height: 35px; display: flex; align-items: center; justify-content: center; gap: 7px; border: 1px solid #262a31; border-radius: 8px; background: #5c5c5c; font-weight: 300; }
.depot { top: 35px; height: 42px; }
.load { top: 82px; height: 6px; display: flex; border-radius: 3px; overflow: hidden; background: #626262; }
.load i { flex: 1; }
.load i:first-child { background: #1b4659; }
.load i:last-child { background: #6b532b; }
.box { top: 74px; width: 23px; height: 23px; }
.driver { top: 4px; width: 28px; height: 28px; border: 1px solid #474747; border-radius: 3px; background: #5c5c5c; color: #414141; }
.driver svg { width: 26px; height: 26px; }
.blue { top: 9px; color: #223a52; }
.hbar { display: flex; align-items: center; height: 17px; margin-top: 8px; padding: 0 8px; }
.hbar div { flex: 1; align-self: stretch; margin: 0 6px 0 8px; }
.hbar div i { display: block; width: 46.4%; height: 100%; background: #4b4b4b; }
.hbar .left { border-left: 0; border-right-color: #3c3c3c; }
.hbar .right { border-right: 0; border-left-color: #2b2b2b; }
.foot { display: flex; align-items: center; justify-content: space-between; height: 42px; padding-left: 12px; }
.stats { display: flex; gap: 14px; margin: 0; padding: 4px 0 0; list-style: none; font-size: 11px; line-height: 13px; text-align: center; white-space: nowrap; }
.stats sup { font-size: 9px; line-height: 0; }
.actions { display: flex; gap: 2px; padding-top: 3px; color: #6a6e70; }
.actions button { display: flex; align-items: center; height: 35px; padding: 0 17px; border-radius: 18px; gap: 12px; box-shadow: 0 0 1px 1px #3a3a3a; }
.actions .act { gap: 6px; background: #20324b; }
.actions .unlock { background: #58301a; }
.actions .lockr { background: #253d27; }
.actions .opt { background: #5c4a2b; box-shadow: none; color: #6d675d; }

/* Floating controls */
.chat {
  position: fixed;
  left: 34px;
  bottom: 64px;
  width: 67px;
  height: 67px;
  display: grid;
  place-items: center;
  border-radius: 50% 6px 50% 50%;
  background: var(--yellow);
  box-shadow: 0 3px 8px #0008;
}
.lang {
  position: fixed;
  left: 34px;
  bottom: 1px;
  width: 148px;
  height: 47px;
  display: flex;
  align-items: center;
  justify-content: center;
  gap: 9px;
  background: var(--yellow);
  color: #000;
}
.lang i { width: 18px; height: 18px; border: 3px solid #000; border-radius: 50%; }

/* Dialogs */
.overlay { position: fixed; inset: 0; display: flex; align-items: center; justify-content: center; }
.modal {
  width: 916px;
  max-width: 90%;
  border-radius: 5px;
  overflow: hidden;
  background: #fff;
  color: #212121;
  box-shadow: 0 11px 15px -7px #0003, 0 24px 38px 3px #00000024, 0 9px 46px 8px #0000001f;
}
.modal.wide { width: 1350px; }
.modal h2 {
  display: flex;
  align-items: center;
  justify-content: space-between;
  height: 72px;
  margin: 0;
  padding: 0 23px 0 18px;
  background: var(--blue);
  color: #e8eff7;
  font-size: 23px;
  font-weight: 400;
}
.modal table { width: calc(100% - 54px); margin: 27px 27px 0; border-collapse: collapse; text-align: left; white-space: nowrap; }
.modal table.fixed { table-layout: fixed; }
.modal th { height: 41px; padding: 0 0 0 9px; font-weight: 500; border-bottom: 2px solid #ddd; }
.modal td { height: 38px; padding: 2px 0 0 9px; font-weight: 300; color: #000; }
.c-code { width: 87.2%; }
.c-veh { width: 95px; }
.marked { position: relative; }
.marker { position: absolute; inset: 28px 20px auto 17px; height: 54px; border: 4px solid #f53b3b; border-radius: 5px; box-shadow: 0 1px 1px #0007; }
.modal footer { display: flex; justify-content: flex-end; padding: 71px 48px 20px; font-weight: 500; }
```
